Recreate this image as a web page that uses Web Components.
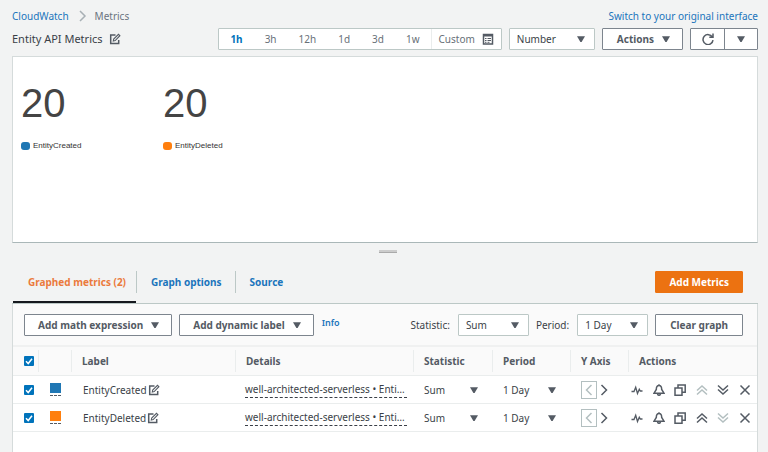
<!DOCTYPE html>
<html lang="en">
<head>
<meta charset="utf-8">
<title>CloudWatch Metrics</title>
<style>
  html { height: 100%; }
  body {
    margin: 0;
    min-height: 100%;
    display: flex;
    background: #f2f3f3;
    color: #3a3f47;
    font: 10px/14px "Noto Sans", "Open Sans", sans-serif;
    --link: #1b75bc;
    --ink: #545b64;
    --line: #bcc8c6;
    --soft: #eaeded;
  }
</style>
</head>
<body>
<cw-app></cw-app>
<script>
const base = `<style>
  *, *::before, *::after { box-sizing: border-box; }
  button, select, input { font: inherit; color: inherit; margin: 0; cursor: pointer; }
  a { color: var(--link); text-decoration: none; }
</style>`;

function define(name, render) {
  customElements.define(name, class extends HTMLElement {
    constructor() {
      super();
      this.attachShadow({ mode: "open" });
    }
    connectedCallback() {
      if (this.shadowRoot.childNodes.length) return;
      const template = document.createElement("template");
      template.innerHTML = base + render(this);
      this.shadowRoot.append(template.content.cloneNode(true));
    }
  });
}

const icons = {
  edit: '<path d="M6.500 2H1.700v8.500h8V7"/><path d="M4.300 8l.4-2L9.500 1.300l1.400 1.400L6.200 7.600z" stroke-width="1.100"/>',
  calendar: '<path d="M1.500 1.500h9v9.500h-9z"/><path d="M1 2.500h10" stroke-width="2"/><path d="M3 5.500h1.500M5.500 5.500h3.500M3 7.500h1.500M5.500 7.500h3.500M3 9.300h1.500M5.500 9.300h2" stroke-width="1"/>',
  refresh: '<path d="M10.300 4A5 5 0 1 0 11 7.200M11 .6V4.300H7.300"/>',
  down: '<path d="M2 3.200h8L6.600 9H5.400z" fill="currentColor" stroke="none"/>',
  crumb: '<path d="M4 1l5 5-5 5"/>',
  left: '<path d="M8.500 1L3.500 6l5 5"/>',
  right: '<path d="M3.500 1l5 5-5 5"/>',
  pulse: '<path d="M.5 7.500H3l1.700-4.300L6.500 9.500 8.300 5.300l1 1.700h2.200" stroke-width="1.300"/>',
  bell: '<path d="M6 1.500C3.800 1.500 3.300 3.500 3.300 5.500L1 9.200h10L8.700 5.500C8.700 3.500 8.200 1.500 6 1.500zM6 .3v1M4.500 10c.4 1.700 2.600 1.700 3 0"/>',
  copy: '<path d="M1 4h7v7.200H1zM4 4V1h7.200v7.200H8"/>',
  up2: '<path d="M1 6.500L6 2l5 4.500M1 10.500L6 6l5 4.500"/>',
  down2: '<path d="M1 1.500L6 6l5-4.500M1 5.500L6 10l5-4.500"/>',
  close: '<path d="M1.500 1.500l9 9M10.500 1.500l-9 9"/>'
};

define("cw-icon", el => `<style>
    :host { display: inline-flex; flex: none; width: 12px; height: 12px; }
    svg { width: 100%; height: 100%; fill: none; stroke: currentColor; stroke-width: 1.500; }
  </style><svg viewBox="0 0 12 12" aria-hidden="true">${icons[el.getAttribute("name")]}</svg>`);

define("cw-button", el => `<style>
    :host { display: inline-flex; flex: none; --pad: 14px; }
    :host([tight]) { --pad: 13px; }
    button {
      display: flex; align-items: center; justify-content: center; gap: 6px;
      height: 22px; padding: 0 var(--pad); white-space: nowrap; font-weight: 700;
      color: var(--ink); background: #fff; border: 1px solid #7d858e; border-radius: 1px;
    }
    :host([primary]) button { color: #fff; background: #ec7211; border-color: #ec7211; }
    :host([menu]) button { padding-right: 10px; }
  </style><button type="button"><slot></slot>${el.hasAttribute("menu") ? '<cw-icon name="down"></cw-icon>' : ""}</button>`);

define("cw-select", el => {
  const label = el.getAttribute("label");
  const bare = el.hasAttribute("bare");
  return `<style>
    :host { display: inline-flex; }
    label { display: flex; align-items: center; gap: 8px; flex: 1; white-space: nowrap; }
    span.box { display: grid; align-items: center; flex: 1; min-width: 71px; }
    :host([wide]) span.box { min-width: 86px; }
    :host([bare]) span.box { min-width: 0; }
    select {
      grid-area: 1 / 1; appearance: none; width: 100%; height: 22px; padding: 0 24px 0 7px;
      background: #fff; border: 1px solid var(--line); border-radius: 1px; outline-offset: -1px;
    }
    :host([bare]) select { border: 0; padding-left: 0; background: transparent; }
    cw-icon { grid-area: 1 / 1; justify-self: end; margin-right: 8px; color: var(--ink); pointer-events: none; }
  </style><label>${bare || el.hasAttribute("wide") ? "" : label}<span class="box">
    <select aria-label="${label.replace(":", "")}"><option>${el.getAttribute("value")}</option></select>
    <cw-icon name="down"></cw-icon></span></label>`;
});

define("cw-check", el => `<style>
    :host { display: block; width: 10px; height: 10px; }
    input {
      display: block; appearance: none; width: 10px; height: 10px;
      background: #fff; border: 1px solid var(--line); border-radius: 1px;
    }
    input:checked {
      border: 0;
      background: #0073bb url('data:image/svg+xml,<svg xmlns="http://www.w3.org/2000/svg" viewBox="0 0 10 10"><path d="M2 5.200l2.200 2.300L8 2.700" fill="none" stroke="white" stroke-width="1.500"/></svg>');
    }
  </style><input type="checkbox" checked aria-label="${el.getAttribute("label")}">`);

define("cw-header", () => `<style>
    :host { display: grid; gap: 5px; padding: 9px 0 6px; }
    nav, .bar, h1, .tools { display: flex; align-items: center; }
    nav { gap: 7px; color: #6b7480; }
    nav cw-icon { color: #a8b0b5; }
    nav a:last-child { margin-left: auto; }
    .bar { gap: 7px; }
    h1 { margin: 0 auto 0 0; gap: 6px; font-size: 11px; line-height: 14px; font-weight: 400; white-space: nowrap; }
    h1 button { display: flex; padding: 0; border: 0; background: none; color: var(--ink); }
    .tools { gap: 7px; }
    .split { display: flex; height: 22px; border: 1px solid #7d858e; border-radius: 1px; background: #fff; }
    .split button { display: grid; place-items: center; width: 33px; padding: 0; border: 0; background: none; color: var(--ink); }
    .split button + button { border-left: 1px solid #7d858e; }
  </style>
  <nav aria-label="Breadcrumb"><a href="#">CloudWatch</a><cw-icon name="crumb"></cw-icon><span>Metrics</span><a href="#">Switch to your original interface</a></nav>
  <div class="bar">
    <h1>Entity API Metrics <button type="button" aria-label="Rename"><cw-icon name="edit"></cw-icon></button></h1>
    <div class="tools">
      <cw-range></cw-range>
      <cw-select wide label="Widget type" value="Number"></cw-select>
      <cw-button menu>Actions</cw-button>
      <div class="split">
        <button type="button" aria-label="Refresh"><cw-icon name="refresh"></cw-icon></button>
        <button type="button" aria-label="Refresh options"><cw-icon name="down"></cw-icon></button>
      </div>
    </div>
  </div>`);

define("cw-range", () => `<style>
    :host { display: flex; height: 22px; background: #fff; border: 1px solid var(--line); border-radius: 1px; }
    button { display: flex; align-items: center; gap: 7px; padding: 0 11px; border: 0; background: none; color: #687078; }
    button[aria-pressed=true] { color: #0073bb; font-weight: 700; }
    button:last-child { padding: 0 7px; border-left: 1px solid var(--soft); }
    cw-icon { color: var(--ink); }
  </style>${["1h", "3h", "12h", "1d", "3d", "1w"].map((t, i) => `<button type="button" aria-pressed="${!i}">${t}</button>`).join("")}<button type="button">Custom <cw-icon name="calendar"></cw-icon></button>`);

define("cw-number", el => `<style>
    :host { display: block; width: 142px; font-family: "Liberation Sans", Arial, sans-serif; }
    strong { display: block; font-size: 40px; line-height: 44px; font-weight: 400; color: #444; }
    span { display: flex; align-items: center; gap: 3px; margin-top: 14px; font-size: 8px; line-height: 14px; color: #333; }
    i { width: 9px; height: 8px; border-radius: 3px; background: ${el.getAttribute("color")}; }
  </style><strong><slot></slot></strong><span><i></i>${el.getAttribute("label")}</span>`);

define("cw-graph", () => `<style>
    :host { display: flex; min-height: 187px; padding: 24px 8px; background: #fff; border: 1px solid #d5dbdb; border-bottom-color: #aab7b8; }
  </style><slot></slot>`);

define("cw-handle", () => `<style>
    :host { display: flex; justify-content: center; padding: 7px 0 8px 6px; }
    i { width: 6px; height: 3px; background: #ccc; border-bottom: 1px solid #aaa; }
  </style><i></i><i></i><i></i>`);

define("cw-tabs", () => `<style>
    :host { display: flex; align-items: stretch; height: 43px; border-bottom: 1px solid var(--line); padding: 0 15px 0 1px; }
    [role=tablist] { display: flex; flex: 1; }
    button { position: relative; padding: 0 13px 0 15px; border: 0; background: none; color: var(--link); font-weight: 700; }
    button + button::before { content: ""; position: absolute; left: 0; top: 10px; height: 22px; border-left: 1px solid #bcc8c6; }
    button[aria-selected=true] { color: #eb7a3c; border-bottom: 2px solid #16191f; padding: 2px 10px 0 15px; }
    cw-button { align-self: center; }
  </style><div role="tablist">
    <button type="button" role="tab" aria-selected="true">Graphed metrics (2)</button><button type="button" role="tab">Graph options</button><button type="button" role="tab">Source</button>
  </div><cw-button primary tight>Add Metrics</cw-button>`);

define("cw-toolbar", () => `<style>
    :host { display: flex; align-items: center; gap: 7px; padding: 10px 14px 9px 11px; background: #fafafa; border-bottom: 2px solid #f0f1f1; }
    a { margin: 0 auto 4px 1px; font-size: 9px; font-weight: 600; }
  </style>
  <cw-button menu tight>Add math expression</cw-button>
  <cw-button menu tight>Add dynamic label</cw-button>
  <a href="#">Info</a>
  <cw-select label="Statistic:" value="Sum"></cw-select>
  <cw-select label="Period:" value="1 Day"></cw-select>
  <cw-button>Clear graph</cw-button>`);

const metrics = [
  { name: "EntityCreated", color: "#1f77b4", first: true },
  { name: "EntityDeleted", color: "#ff7f0e", first: false }
];

const action = (icon, label, off) => `<button type="button" aria-label="${label}"${off ? " disabled" : ""}><cw-icon name="${icon}"></cw-icon></button>`;

define("cw-table", () => `<style>
    :host { display: block; background: #fff; }
    table { width: 100%; table-layout: fixed; border-collapse: separate; border-spacing: 0; }
    th, td { height: 28px; padding: 0 6px 0 10px; text-align: left; white-space: nowrap; border-bottom: 1px solid var(--soft); }
    th { height: 29px; padding-left: 11px; background: linear-gradient(#eaeded, #eaeded) left / 1px 22px no-repeat #fafafa; color: var(--ink); font-weight: 700; }
    th:first-child { background: #fafafa; }
    td:first-child, td:nth-child(5), td:nth-child(6), td:nth-child(7) { padding-left: 11px; }
    td:nth-child(3) { padding-left: 12px; }
    td:nth-child(5), td:nth-child(6) { padding-right: 4px; }
    td:last-child { padding: 0 6px 0 3px; }
    .check { width: 25px; } .swatch { width: 33px; } .label { width: 164px; }
    .stat { width: 79px; } .period { width: 78px; } .axis { width: 58px; } .actions { width: 129px; }
    button { display: flex; padding: 0; border: 0; background: none; color: var(--ink); }
    button:disabled { color: #b3bfc0; }
    .name, .pair, .acts { display: flex; align-items: center; }
    .name { gap: 1px; }
    .pair { gap: 1px; }
    .pair button:disabled { border: 1px solid #b3bfc0; padding: 2px 1px; }
    .acts { justify-content: space-between; }
    .color { display: grid; gap: 2px; padding: 0 0 2px; width: 11px; margin-left: 2px; border-bottom: 1px dashed var(--ink); }
    .color i { height: 10px; }
    .details { border-bottom: 1px dashed #3a3f47; line-height: 15px; }
    cw-select { display: flex; }
  </style>
  <table>
    <thead><tr>
      <th class="check"><cw-check label="Select all"></cw-check></th><th class="swatch"></th><th class="label">Label</th><th>Details</th>
      <th class="stat">Statistic</th><th class="period">Period</th><th class="axis">Y Axis</th><th class="actions">Actions</th>
    </tr></thead>
    <tbody>${metrics.map(m => `<tr>
      <td><cw-check label="Select ${m.name}"></cw-check></td>
      <td><button type="button" class="color" aria-label="Colour"><i style="background:${m.color}"></i></button></td>
      <td><div class="name">${m.name}${action("edit", "Edit label")}</div></td>
      <td><div class="details">well-architected-serverless • Enti…</div></td>
      <td><cw-select bare label="Statistic" value="Sum"></cw-select></td>
      <td><cw-select bare label="Period" value="1 Day"></cw-select></td>
      <td><div class="pair">${action("left", "Left axis", true)}${action("right", "Right axis")}</div></td>
      <td><div class="acts">${action("pulse", "Anomaly detection")}${action("bell", "Create alarm")}${action("copy", "Duplicate")}${action("up2", "Move up", m.first)}${action("down2", "Move down", !m.first)}${action("close", "Remove")}</div></td>
    </tr>`).join("")}</tbody>
  </table>`);

define("cw-app", () => `<style>
    :host { display: flex; flex-direction: column; flex: 1; min-width: 0; padding: 0 10px 0 12px; }
    main { flex: 1; background: #fff; border: solid #d5dbdb; border-width: 0 1px; }
  </style>
  <cw-header></cw-header>
  <cw-graph>
    <cw-number color="#1f77b4" label="EntityCreated">20</cw-number>
    <cw-number color="#ff7f0e" label="EntityDeleted">20</cw-number>
  </cw-graph>
  <cw-handle></cw-handle>
  <cw-tabs></cw-tabs>
  <main><cw-toolbar></cw-toolbar><cw-table></cw-table></main>`);
</script>
</body>
</html>
